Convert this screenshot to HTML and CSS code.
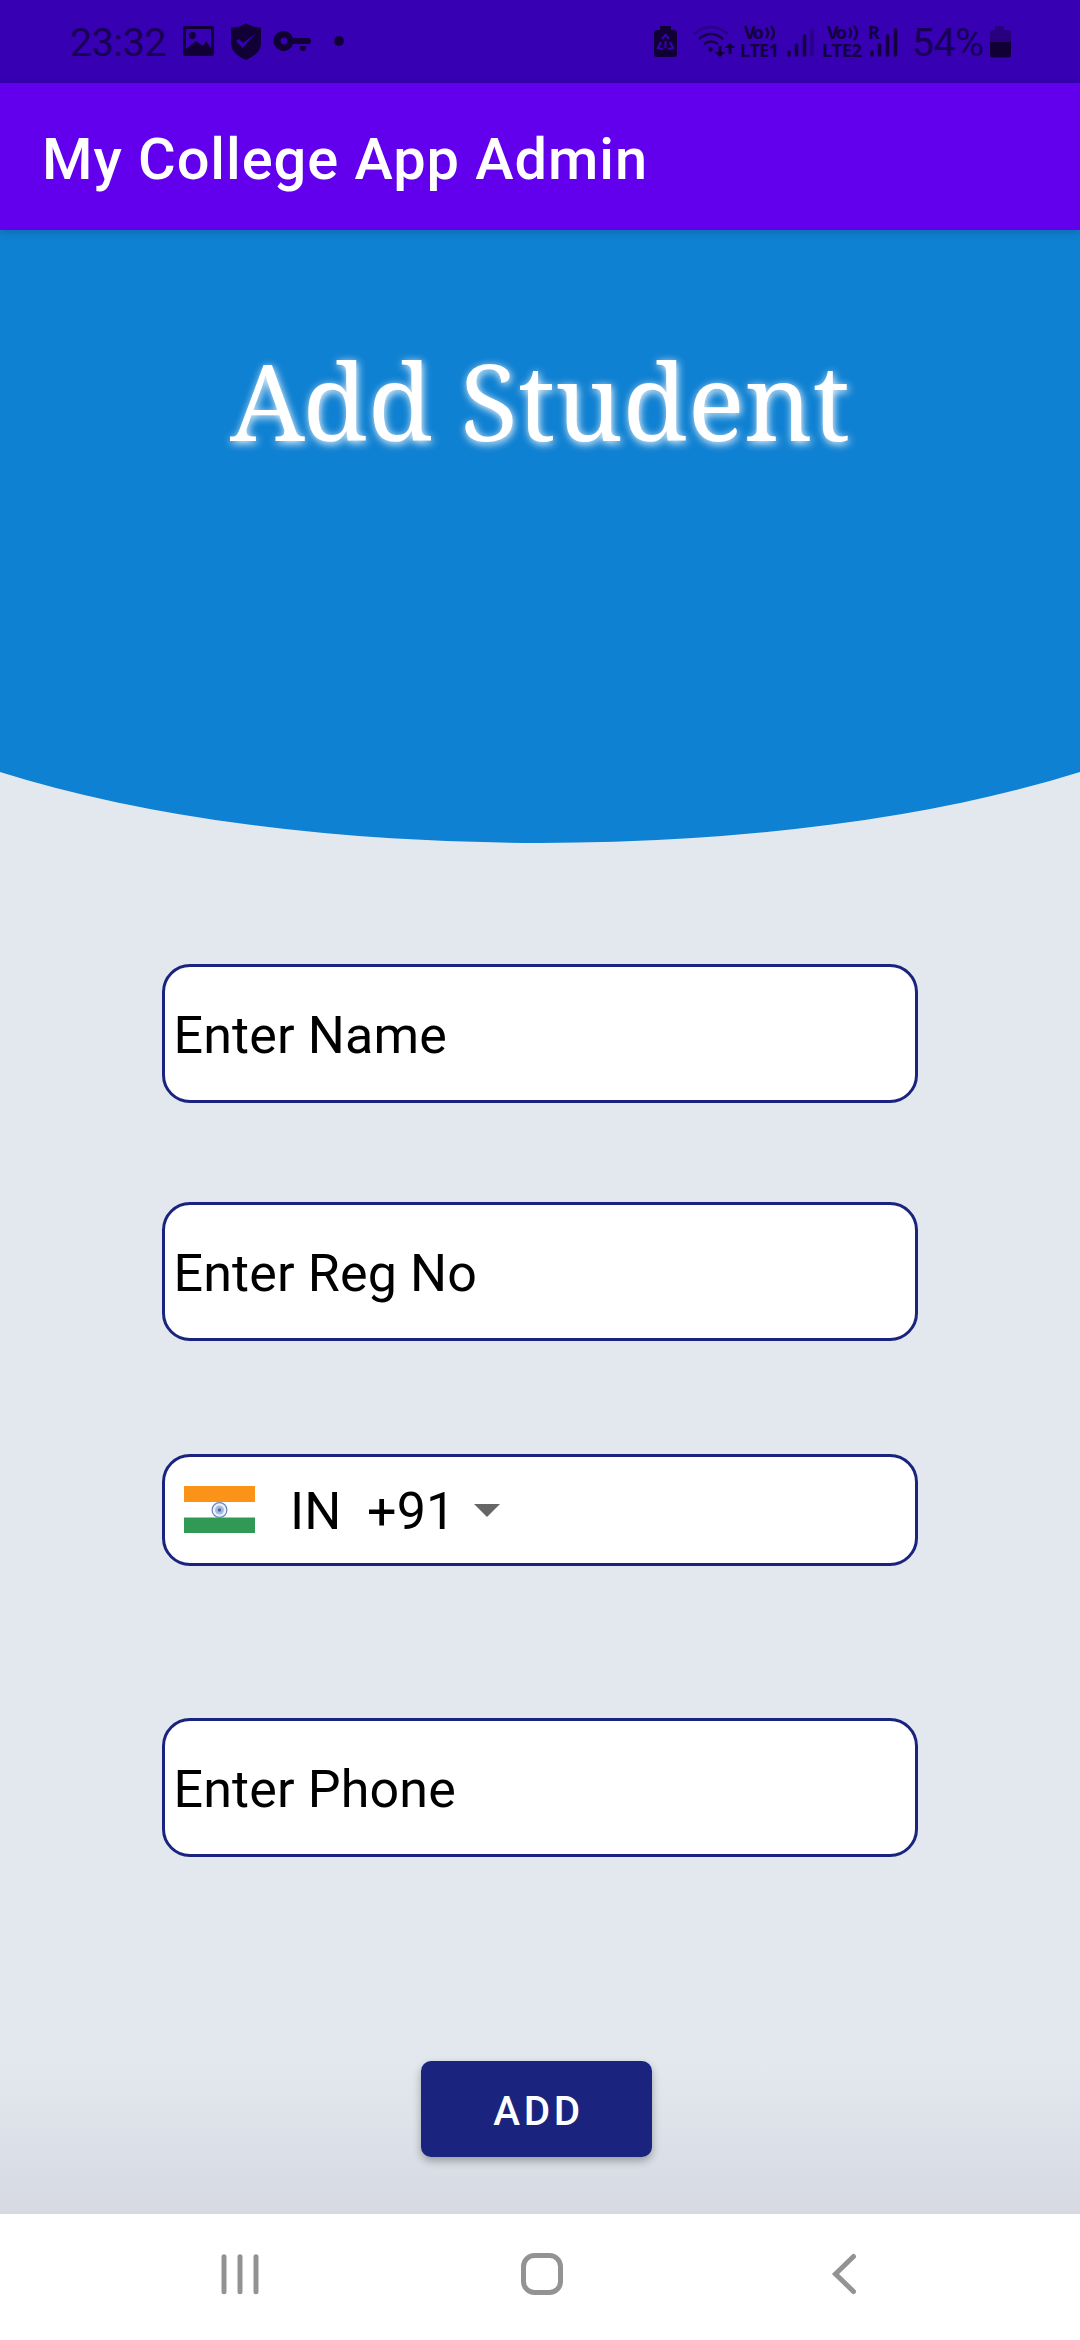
FILE: index.html
```
<!DOCTYPE html>
<html lang="en">
<head>
<meta charset="utf-8">
<title>My College App Admin</title>
<link rel="stylesheet" href="styles.css">
</head>
<body>
<div class="screen">
  <div class="status">
    <span class="clock">23:32</span>
    <svg class="notif" width="166" height="84" viewBox="180 0 166 84">
      <path fill-rule="evenodd" d="M185 26h27a2 2 0 0 1 2 2v26a2 2 0 0 1-2 2h-27a2 2 0 0 1-2-2V28a2 2 0 0 1 2-2zm1 3v20l10-8 7 5 3-5 5 7V29z"/>
      <circle cx="192.500" cy="35.500" r="3.400"/>
      <path d="M246 23c4 3 9 4.500 15 4.500V43c0 8-6 13-15 17-9-4-15-9-15-17V27.500c6 0 11-1.500 15-4.500z"/>
      <path class="tick" d="M236 41l6.500 7 13-14.500-12.500 9.500-4-4z"/>
      <path fill-rule="evenodd" d="M284 31a10 10 0 0 1 9 7h15a3 3 0 0 1 0 6h-15a10 10 0 1 1-9-13zm0 6.500a3.500 3.500 0 1 0 .01 0zM300 46h6v2a3 3 0 0 1-6 0z"/>
      <circle cx="339" cy="41" r="5"/>
    </svg>
    <svg class="signals" width="260" height="84" viewBox="650 0 260 84">
      <path d="M660 26h11v4h3a3 3 0 0 1 3 3v21a3 3 0 0 1-3 3h-17a3 3 0 0 1-3-3V33a3 3 0 0 1 3-3h3z"/>
      <g class="recycle"><path d="M662 39l3.500-4 3.500 4M661 42l-3 6 5 1M670 42l3 6-5 1M665.500 41v7"/></g>
      <g class="arc"><path class="dim" d="M694 34q17-14 34 0"/><path d="M699 39q12-10 24 0M704 44q7-5 14 0"/></g>
      <circle cx="710.500" cy="49.500" r="2.200"/>
      <path d="M718.500 46h3v6h4l-5.500 5-5.500-5h4zM728.500 54h3v-6h4l-5.500-5-5.500 5h4z"/>
      <text class="tag" x="744" y="39" textLength="20">Vo</text>
      <path class="wave" d="M766 28q4 5 0 10M771 26q6 7 0 14"/>
      <text class="tag" x="740" y="57" textLength="39">LTE1</text>
      <g class="bars"><path d="M789 52v3M796.500 45v10M804.500 36v19"/><path class="dim" d="M812 30v25"/></g>
      <text class="tag" x="827" y="39" textLength="20">Vo</text>
      <path class="wave" d="M849 28q4 5 0 10M854 26q6 7 0 14"/>
      <text class="tag" x="822" y="57" textLength="40">LTE2</text>
      <text class="tag roam" x="868" y="39">R</text>
      <g class="bars"><path d="M872 52v3M879.500 45v10M887.500 36v19M895.500 30v25"/></g>
    </svg>
    <span class="percent">54%</span>
    <svg class="battery" width="22" height="84" viewBox="0 0 22 84">
      <path class="dim-fill" d="M6 26h9v4h5a2 2 0 0 1 2 2v10H1V32a2 2 0 0 1 2-2h3z"/>
      <path d="M1 42h21v13a2.500 2.500 0 0 1-2.500 2.500h-16A2.500 2.500 0 0 1 1 55z"/>
    </svg>
  </div>
  <header class="appbar"><span class="apptitle">My College App Admin</span></header>
  <main class="page">
    <section class="hero">
      <svg class="curve" width="1080" height="613" viewBox="0 0 1080 613"><path d="M0 0H1080V542A771 248 0 0 1 0 542z"/></svg>
      <h1 class="heading">Add Student</h1>
    </section>
    <form class="form">
      <div class="field name">Enter Name</div>
      <div class="field reg">Enter Reg No</div>
      <div class="field country">
        <svg class="flag" width="71" height="47" viewBox="0 0 71 47">
          <path fill="#fb9318" d="M0 0h71v16H0z"/><path fill="#309a55" d="M0 31.500h71V47H0z"/>
          <circle cx="35.500" cy="24" r="7.400" fill="#eef3fa" stroke="#6a86c0" stroke-width="1.200"/>
          <circle cx="35.500" cy="24" r="4.500" fill="#a9bbde"/><circle cx="35.500" cy="24" r="1.800" fill="#4768ad"/>
        </svg>
        <span class="iso">IN</span><span class="dial">+91</span>
        <svg class="caret" width="26" height="13" viewBox="0 0 26 13"><path fill="#666" d="M0 0h26L13 13z"/></svg>
      </div>
      <div class="field phone">Enter Phone</div>
      <button class="add" type="button">ADD</button>
    </form>
  </main>
  <nav class="navbar">
    <svg width="1080" height="126" viewBox="0 0 1080 126">
      <path d="M224 42.700v35M240 42.700v35M256 42.700v35"/>
      <rect x="523.500" y="41.500" width="37" height="37" rx="11"/>
      <path d="M853.500 42.500L835.500 60l18 17.500"/>
    </svg>
  </nav>
</div>
</body>
</html>
```
FILE: styles.css
```
* { box-sizing: border-box; }
body { margin: 0; font-family: Roboto, "Liberation Sans", sans-serif; }
.screen { width: 1080px; height: 2340px; display: flex; flex-direction: column; overflow: hidden; background: #e3e8ef; }
svg { display: block; flex: none; }

.status { height: 83px; flex: none; display: flex; align-items: flex-start; background: #3700b3; color: #180052; fill: #110036; font-size: 39.5px; line-height: 86px; }
.clock { width: 110px; margin-left: 70px; letter-spacing: -0.4px; }
.signals { margin-left: 304px; }
.percent { width: 76px; margin-left: 2px; letter-spacing: -0.6px; }
.battery { margin-left: 1px; }
.tick { fill: #3700b3; }
.recycle { fill: none; stroke: #3700b3; stroke-width: 2.2; }
.arc { fill: none; stroke: #14003e; stroke-width: 2.6; }
.wave { fill: none; stroke: #14003e; stroke-width: 2.4; }
.bars { fill: none; stroke: #14003e; stroke-width: 3.6; stroke-linecap: round; }
.arc .dim, .bars .dim { stroke: #2a0088; }
.dim-fill { fill: #28007f; }
.tag { font: 700 18px "Open Sans", sans-serif; fill: #14003e; }

.appbar { height: 147px; flex: none; position: relative; z-index: 1; display: flex; align-items: center; padding: 5px 0 0 42px; background: #6200ee; color: #fff; box-shadow: 0 2px 8px rgba(0, 0, 0, .18); }
.apptitle { font-size: 57.75px; font-weight: 500; white-space: nowrap; letter-spacing: .95px; }

.page { flex: 1; background: linear-gradient(#e3e8ef 0, #e3e8ef 1830px, #d6d9e2 1984px); }
.hero { height: 613px; display: grid; }
.curve { grid-area: 1 / 1; fill: #0f81d2; }
.heading { grid-area: 1 / 1; justify-self: center; margin: 105px 0 0; font: 400 106px/130px "Noto Serif", "DejaVu Serif Condensed", "DejaVu Serif", serif; color: #fff; white-space: nowrap; text-shadow: 1px 2px 8px #fff; }

.form { display: flex; flex-direction: column; align-items: center; padding-top: 121px; }
.field { width: 756px; height: 139px; display: flex; align-items: center; padding: 3px 0 0 8.5px; border: 3px solid #1a237e; border-radius: 28px; background: #fff; color: #000; font-size: 52px; letter-spacing: .15px; }
.reg { margin-top: 99px; }
.country { height: 112px; margin-top: 113px; padding: 3px 0 0 19px; }
.phone { margin-top: 152px; }
.flag { margin-bottom: 4px; }
.iso { width: 77px; margin-left: 35px; }
.dial { width: 84px; }
.caret { margin: 0 0 2px 23px; }
.add { width: 231px; height: 96px; margin: 204px 7px 0 0; padding: 5px 0 0 4px; border: 0; border-radius: 10px; background: #1a237e; color: #fff; font: 500 40.4px Roboto, sans-serif; letter-spacing: 3.6px; box-shadow: 0 4px 8px rgba(0, 0, 0, .3); }

.navbar { height: 126px; flex: none; background: #fff; fill: none; stroke: #939393; stroke-width: 5; stroke-linecap: round; }
```
